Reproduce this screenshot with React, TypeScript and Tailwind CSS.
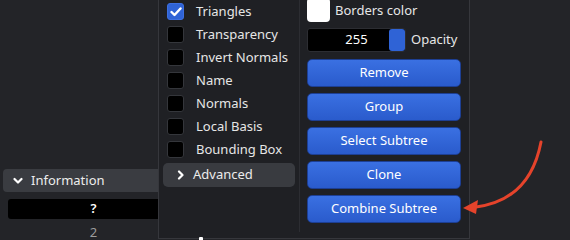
import React from "react";

const font = { fontFamily: '"Noto Sans", "Open Sans", sans-serif' };

function Check({ checked }: { checked?: boolean }) {
  return (
    <div
      className={
        "w-[17px] h-[17px] rounded-[3px] flex items-center justify-center shrink-0 " +
        (checked ? "bg-[#2f63d6] border border-[#3d6fe0]" : "bg-black border border-[#34363b]")
      }
    >
      {checked && (
        <svg width="12" height="10" viewBox="0 0 12 10">
          <polyline points="1.5,5 4.5,8 10.5,1.5" fill="none" stroke="white" strokeWidth="2.4" strokeLinecap="round" strokeLinejoin="round" />
        </svg>
      )}
    </div>
  );
}

function ChevronDown() {
  return (
    <svg width="10" height="8" viewBox="0 0 10 8">
      <polyline points="1.5,2 5,5.5 8.5,2" fill="none" stroke="white" strokeWidth="2.2" strokeLinecap="round" strokeLinejoin="round" />
    </svg>
  );
}

function ChevronRight() {
  return (
    <svg width="8" height="10" viewBox="0 0 8 10">
      <polyline points="2,1.5 5.5,5 2,8.5" fill="none" stroke="white" strokeWidth="2.2" strokeLinecap="round" strokeLinejoin="round" />
    </svg>
  );
}

function Btn({ label }: { label: string }) {
  return (
    <div className="h-[28px] rounded-[5px] border border-[#1d3f94] bg-gradient-to-b from-[#3a70e2] to-[#2a5bcc] flex items-center justify-center text-white text-[13px]">
      {label}
    </div>
  );
}

export default function App() {
  const rows = ["Triangles", "Transparency", "Invert Normals", "Name", "Normals", "Local Basis", "Bounding Box"];
  return (
    <div className="relative w-[570px] h-[240px] overflow-hidden bg-[#232428]" style={font}>
      {/* Left panel */}
      <div className="flex flex-col pt-[169px] pl-[3px] w-[190px]">
        <div className="h-[23px] rounded-[4px] bg-[#3a3c41] flex items-center pl-[10px] gap-[8px] text-[#ececec] text-[13px]">
          <ChevronDown />
          <span>Information</span>
        </div>
        <div className="mt-[7px] ml-[5px] mr-[11px] h-[20px] rounded-[3px] bg-black flex items-center justify-center text-white text-[13px] font-semibold">
          ?
        </div>
        <div className="mt-[3px] ml-[5px] mr-[11px] text-center text-[#9c9c9c] text-[13px] leading-[20px]">2</div>
      </div>

      {/* Popup */}
      <div className="absolute left-[158px] top-0 w-[312px] h-[239px] bg-[#1f2024] border-l border-r border-b border-[#36373c] flex">
        <div className="w-[141px] h-[232px] border-r border-[#2c2d32] flex flex-col">
          <div className="flex flex-col pl-[8px]">
            {rows.map((r, i) => (
              <div key={r} className="h-[23px] flex items-center gap-[12px] text-[#e6e6e6] text-[13px]">
                <Check checked={i === 0} />
                <span>{r}</span>
              </div>
            ))}
          </div>
          <div className="mt-[2px] ml-[4px] mr-[4px] h-[24px] rounded-[5px] bg-[#393b40] flex items-center pl-[14px] gap-[8px] text-[#ececec] text-[13px]">
            <ChevronRight />
            <span>Advanced</span>
          </div>
        </div>
        <div className="flex-1 flex flex-col pl-[7px] pr-[8px]">
          <div className="h-[22px] flex items-center gap-[5px] text-[#e6e6e6] text-[13px]">
            <div className="w-[23px] h-[24px] -mt-[2px] rounded-[4px] bg-white shrink-0" />
            <span>Borders color</span>
          </div>
          <div className="mt-[6px] h-[24px] flex items-center gap-[5px] text-[#e6e6e6] text-[13px]">
            <div className="relative w-[99px] h-[24px] rounded-[3px] bg-black border border-[#2c2d32] flex items-center">
              <span className="w-full text-center text-white">255</span>
              <div className="absolute right-0 top-0 w-[16px] h-[22px] rounded-[3px] bg-[#2f63d6]" />
            </div>
            <span>Opacity</span>
          </div>
          <div className="mt-[7px] flex flex-col gap-[6px]">
            <Btn label="Remove" />
            <Btn label="Group" />
            <Btn label="Select Subtree" />
            <Btn label="Clone" />
            <Btn label="Combine Subtree" />
          </div>
        </div>
        <div className="absolute left-[40px] bottom-[-2px] w-[4px] h-[3px] bg-white rounded-t-[1px]" />
      </div>

      {/* Annotation arrow */}
      <svg className="absolute left-0 top-0" width="570" height="240" viewBox="0 0 570 240">
        <path d="M541 142 Q 530 200 476 207" fill="none" stroke="#e5432b" strokeWidth="3" strokeLinecap="round" />
        <polygon points="463,208 478,200 476,214" fill="#e5432b" />
      </svg>
    </div>
  );
}
